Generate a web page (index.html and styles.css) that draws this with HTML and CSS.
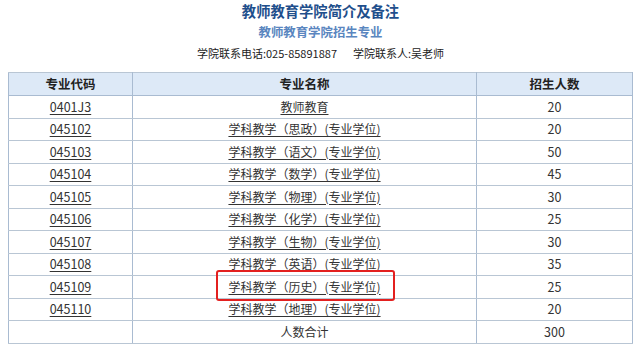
FILE: index.html
```html
<!DOCTYPE html>
<html lang="zh-CN">
<head>
<meta charset="utf-8">
<title>教师教育学院简介及备注</title>
<link rel="stylesheet" href="styles.css">
</head>
<body>
<h1 class="title">教师教育学院简介及备注</h1>
<h2 class="subtitle">教师教育学院招生专业</h2>
<p class="contact">学院联系电话:025-85891887<span class="gap"></span>学院联系人:吴老师</p>
<table class="majors">
  <colgroup>
    <col class="c-code"><col class="c-name"><col class="c-num">
  </colgroup>
  <thead>
    <tr><th>专业代码</th><th>专业名称</th><th>招生人数</th></tr>
  </thead>
  <tbody>
    <tr><td><a href="#">0401J3</a></td><td><a href="#">教师教育</a></td><td>20</td></tr>
    <tr><td><a href="#">045102</a></td><td><a href="#">学科教学（思政）(专业学位)</a></td><td>20</td></tr>
    <tr><td><a href="#">045103</a></td><td><a href="#">学科教学（语文）(专业学位)</a></td><td>50</td></tr>
    <tr><td><a href="#">045104</a></td><td><a href="#">学科教学（数学）(专业学位)</a></td><td>45</td></tr>
    <tr><td><a href="#">045105</a></td><td><a href="#">学科教学（物理）(专业学位)</a></td><td>30</td></tr>
    <tr><td><a href="#">045106</a></td><td><a href="#">学科教学（化学）(专业学位)</a></td><td>25</td></tr>
    <tr><td><a href="#">045107</a></td><td><a href="#">学科教学（生物）(专业学位)</a></td><td>30</td></tr>
    <tr><td><a href="#">045108</a></td><td><a href="#">学科教学（英语）(专业学位)</a></td><td>35</td></tr>
    <tr><td><a href="#">045109</a></td><td><a href="#" class="marked">学科教学（历史）(专业学位)</a></td><td>25</td></tr>
    <tr><td><a href="#">045110</a></td><td><a href="#">学科教学（地理）(专业学位)</a></td><td>20</td></tr>
    <tr><td></td><td>人数合计</td><td>300</td></tr>
  </tbody>
</table>
</body>
</html>
```
FILE: styles.css
```css
html, body {
  background: #ffffff;
}
body {
  margin: 0 7px 0 8px;
  font-family: "Microsoft YaHei", "Noto Sans CJK SC", "Noto Sans", sans-serif;
  color: #333333;
}
.title {
  margin: 0;
  padding-top: 1px;
  height: 20px;
  line-height: 20px;
  text-align: center;
  font-size: 14.3px;
  font-weight: bold;
  color: #1f4f8c;
}
.subtitle {
  margin: 0;
  height: 22px;
  line-height: 22px;
  text-align: center;
  font-size: 12.4px;
  font-weight: bold;
  color: #5a86bf;
}
.contact {
  margin: 0;
  height: 20px;
  line-height: 20px;
  text-align: center;
  font-size: 11px;
  color: #222222;
}
.gap {
  display: inline-block;
  width: 16px;
}
.majors {
  margin-top: 9px;
  width: 100%;
  border-collapse: collapse;
  border: 1px solid #8ea6c4;
  table-layout: fixed;
  font-size: 12px;
}
.c-code { width: 124px; }
.c-name { width: 344px; }
.c-num { width: auto; }
.majors th,
.majors td {
  border: 1px solid #a9bbd1;
  border-top-color: #b9c6d4;
  border-bottom-color: #b9c6d4;
  text-align: center;
  padding: 0;
  height: 21.5px;
  line-height: 20px;
}
.majors th {
  background: #dde9f7;
  font-size: 12.5px;
  font-weight: bold;
  color: #222222;
  height: 22px;
  border-bottom-color: #a9bbd1;
}
.majors td {
  color: #333333;
}
.majors td:first-child a,
.majors td:last-child {
  font-size: 12.5px;
}
.majors a {
  color: #333333;
  text-decoration: underline;
  text-underline-offset: 2px;
}
.marked {
  position: relative;
}
.marked::after {
  content: "";
  position: absolute;
  left: -12px;
  right: -14px;
  top: -8px;
  bottom: -6px;
  border: 2px solid #e3201f;
  border-radius: 3px;
}
```
